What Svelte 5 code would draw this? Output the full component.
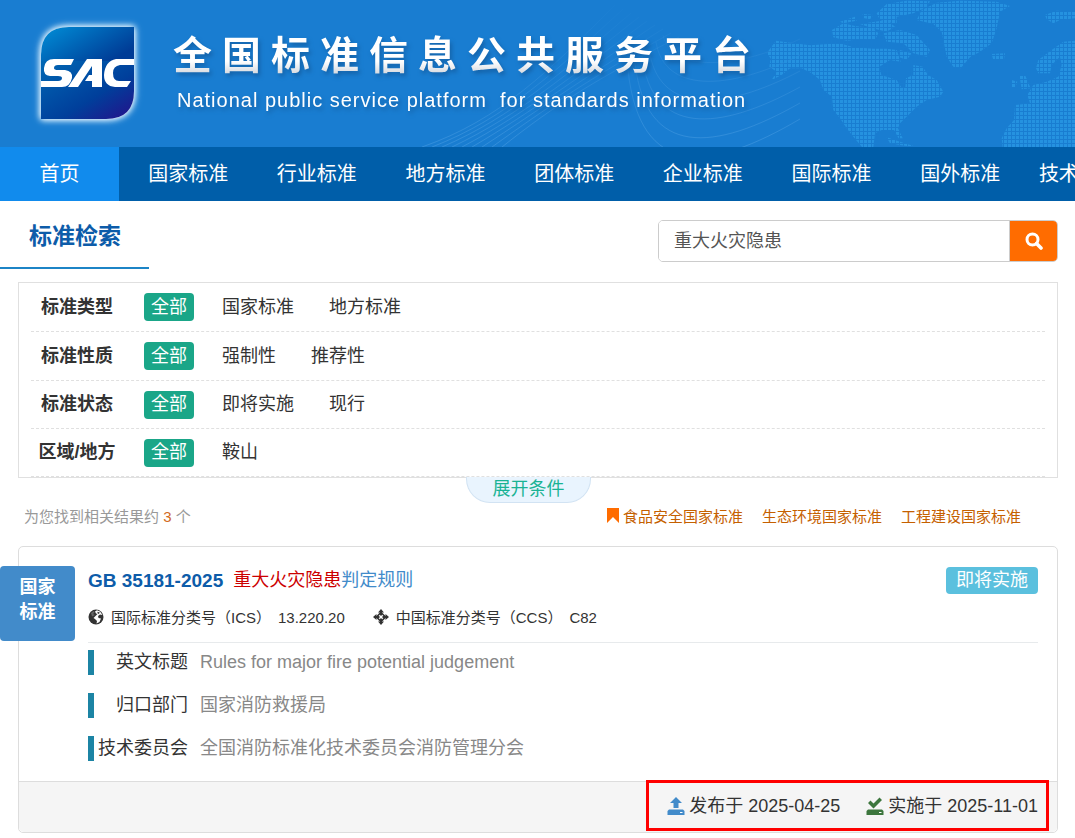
<script lang="ts">
  const navItems = ['首页', '国家标准', '行业标准', '地方标准', '团体标准', '企业标准', '国际标准', '国外标准', '技术委员会'];

  const filters = [
    { label: '标准类型', options: ['国家标准', '地方标准'] },
    { label: '标准性质', options: ['强制性', '推荐性'] },
    { label: '标准状态', options: ['即将实施', '现行'] },
    { label: '区域/地方', options: ['鞍山'] },
  ];

  const topics = ['食品安全国家标准', '生态环境国家标准', '工程建设国家标准'];

  const details = [
    { label: '英文标题', value: 'Rules for major fire potential judgement' },
    { label: '归口部门', value: '国家消防救援局' },
    { label: '技术委员会', value: '全国消防标准化技术委员会消防管理分会' },
  ];

  let keyword = '重大火灾隐患';
</script>

<header class="banner">
  <svg class="waves" viewBox="0 0 400 147" aria-hidden="true">
    <defs>
      <linearGradient id="fade" x1="0" y1="0" x2="0" y2="147" gradientUnits="userSpaceOnUse">
        <stop offset="0" stop-color="#5aa8e8" stop-opacity="0" />
        <stop offset="1" stop-color="#5aa8e8" stop-opacity="0.4" />
      </linearGradient>
    </defs>
    {#each Array(9) as _, i}
      <path d="M{22 + i * 10} 147 C{100 + i * 7} {120 - i * 2} {150 + i * 6} {70 + i} {215 + i * 8} {5 + i * 4}" />
    {/each}
    {#each Array(6) as _, i}
      <path d="M{228 + i * 7} {70 - i * 7} C{240 + i * 6} {180 - i * 22} {310 + i * 4} {172 - i * 20} 400 {119 - i * 16}" />
    {/each}
  </svg>
  <svg class="map" viewBox="0 0 1005 441" aria-hidden="true">
    <defs>
      <pattern id="dots" width="12" height="12" patternUnits="userSpaceOnUse">
        <rect width="9" height="9" fill="#2592e0" />
      </pattern>
    </defs>
    <g fill="url(#dots)">
      <path d="M80 160 L108 122 150 128 210 136 300 130 340 142 400 146 440 146 470 150 482 185 450 180 418 200 424 225 470 240 484 262 496 262 498 235 520 225 520 195 548 200 564 225 590 240 610 275 600 290 560 300 530 320 505 345 480 370 474 385 488 415 476 415 462 390 425 390 405 400 400 441 366 441 340 410 320 385 300 355 280 330 276 290 250 270 240 240 215 220 185 205 150 205 125 225 95 240 110 215 88 200 92 175z" />
      <path d="M276 90 L310 70 345 78 400 85 415 100 405 120 360 118 320 122 280 112z M300 65 L345 50 350 62 310 70z M368 42 L400 45 390 58 370 54z M360 72 L440 60 465 80 440 95 395 84z M410 40 L440 12 500 2 570 4 560 22 520 40 470 50 470 72 420 60z M430 100 L480 90 530 105 570 150 560 170 520 160 490 130 440 125z M480 150 L515 160 500 180 475 170z M440 412 L480 425 520 438 500 438 450 430z" />
      <path d="M545 30 L590 8 660 2 770 5 810 18 780 35 770 85 755 130 720 155 690 172 662 205 640 200 620 170 612 130 605 95 580 72 530 60z" />
      <path d="M755 162 L795 160 792 178 760 180z M915 45 L950 32 1005 35 1005 55 960 60 940 70 920 58z M838 225 L855 225 872 265 845 268z M815 240 L832 245 825 264 815 262z" />
      <path d="M1005 122 L970 125 935 150 895 180 888 205 895 220 930 220 935 195 960 170 965 195 955 230 920 245 880 255 862 285 870 310 825 315 822 360 800 385 785 415 788 441 1005 441z" />
    </g>
  </svg>

  <a href="#home" class="brand">
    <svg class="logo" viewBox="0 0 120 120" role="img" aria-label="SAC">
      <defs>
        <linearGradient id="sky" x1="0" y1="0" x2="1" y2="0.6">
          <stop offset="0" stop-color="#008fd8" />
          <stop offset="1" stop-color="#003c96" />
        </linearGradient>
        <linearGradient id="sea" x1="0" y1="0" x2="1" y2="1">
          <stop offset="0" stop-color="#0068b5" />
          <stop offset="0.6" stop-color="#003f9b" />
          <stop offset="1" stop-color="#25108a" />
        </linearGradient>
      </defs>
      <path class="glow" d="M11 40 Q11 12 39 12 H104 V76 Q104 104 76 104 H11z" />
      <path fill="url(#sky)" d="M11 40 Q11 12 39 12 H104 V46 H11z" />
      <path fill="url(#sea)" d="M11 46 H104 V76 Q104 104 76 104 H11z" />
      <g fill="#fff">
        <path d="M24 44 H44 L41 50 H28 Q24 50 24 53 Q24 55 28 55 H35 Q43 56 42 63 Q40 72 32 72 H11 V66 H28 Q32 66 32 63 Q32 61 28 61 H20 Q13 60 14 53 Q15 44 24 44z" />
        <path d="M57 44 H72 V72 H62 V66 H55 L59 60 H62 V51 L48 72 H38z" />
        <path d="M86 44 H104 V50 H90 Q83 51 83 58 Q83 66 89 66 H101 L97 72 H85 Q74 71 74 60 Q75 46 86 44z" />
      </g>
    </svg>
    <span class="titles">
      <strong>全国标准信息公共服务平台</strong>
      <span class="subtitle">National public service platform&nbsp; for standards information</span>
    </span>
  </a>
</header>

<nav>
  {#each navItems as item, i}
    <a href="#nav-{i}" class:active={i === 0}>{item}</a>
  {/each}
</nav>

<main>
  <div class="search-bar">
    <h1>标准检索</h1>
    <form class="search" on:submit|preventDefault>
      <input type="text" aria-label="标准检索" bind:value={keyword} />
      <button type="submit" aria-label="搜索">
        <svg viewBox="0 0 18 18" width="18" height="18">
          <circle cx="7.5" cy="7.5" r="5.5" fill="none" stroke="#fff" stroke-width="3" />
          <path d="M11.5 11.5 L16 16" stroke="#fff" stroke-width="3.6" stroke-linecap="round" />
        </svg>
      </button>
    </form>
  </div>

  <section class="filters">
    {#each filters as filter}
      <div class="filter">
        <b>{filter.label}</b>
        <button type="button" class="all">全部</button>
        {#each filter.options as option}
          <a href="#filter">{option}</a>
        {/each}
      </div>
    {/each}
    <button type="button" class="expand">展开条件</button>
  </section>

  <div class="summary">
    <span>为您找到相关结果约 <em>3</em> 个</span>
    <div class="topics">
      <svg viewBox="0 0 12 15" width="12" height="15" aria-hidden="true">
        <path d="M0 0 H12 V15 L6 9 L0 15z" fill="#ff6c00" />
      </svg>
      {#each topics as topic}
        <a href="#topic">{topic}</a>
      {/each}
    </div>
  </div>

  <article class="card">
    <div class="ribbon">国家<br />标准</div>
    <div class="card-body">
      <div class="card-head">
        <h2>
          <a href="#standard" class="code">GB 35181-2025</a>
          <a href="#standard"><mark>重大火灾隐患</mark>判定规则</a>
        </h2>
        <span class="status">即将实施</span>
      </div>
      <div class="classes">
        <div>
          <svg viewBox="0 0 16 16" width="16" height="16" aria-hidden="true">
            <circle cx="8" cy="8" r="7.5" fill="#333" />
            <path d="M3 4 L6 2 L6.5 3.5 L5 5 L7 6 L4 7.5z" fill="#fff" opacity="0.25" />
            <path d="M7 2.5 L9 1.2 L12 2.5 L14.5 6 L12 5.5 L10 7 L10.5 9 L13 9.5 L11.5 13 L8.5 14.5 L9 12 L7 10 L5.5 9 L7.5 7 L9.5 5 L8 4.5z" fill="#fff" />
            <path d="M9.5 2.8 L11.8 3.6 L10.8 5 L9.5 4.3z" fill="#333" />
          </svg>
          <span>国际标准分类号（ICS）</span>
          <span>13.220.20</span>
        </div>
        <div>
          <svg viewBox="0 0 16 16" width="16" height="16" aria-hidden="true">
            <path d="M8 0 L11 3.5 H9 V6.5 H7 V3.5 H5z M16 8 L12.5 11 V9 H9.5 V7 H12.5 V5z M8 16 L5 12.5 H7 V9.5 H9 V12.5 H11z M0 8 L3.5 5 V7 H6.5 V9 H3.5 V11z" fill="#333" />
            <path d="M8 3.5 L12.5 8 L8 12.5 L3.5 8z" fill="none" stroke="#333" stroke-width="1.6" />
          </svg>
          <span>中国标准分类号（CCS）</span>
          <span>C82</span>
        </div>
      </div>
      <dl>
        {#each details as detail}
          <div>
            <dt>{detail.label}</dt>
            <dd>{detail.value}</dd>
          </div>
        {/each}
      </dl>
    </div>
    <footer>
      <div class="dates">
        <span>
          <svg viewBox="0 0 18 18" width="18" height="18" aria-hidden="true">
            <path d="M9 0 L15 6 H11.5 V11 H6.5 V6 H3z M2 12.5 H16 L17.5 14 V18 H0.5 V14z" fill="#428bca" />
            <path d="M13 15.5 H15.5" stroke="#fff" />
          </svg>
          发布于 2025-04-25
        </span>
        <span>
          <svg viewBox="0 0 18 18" width="18" height="18" aria-hidden="true">
            <path d="M2 6 L4.5 3.5 L7.5 6.5 L13.5 0.5 L16 3 L7.5 11.5z M2 12.5 H16 L17.5 14 V18 H0.5 V14z" fill="#3c763d" />
            <path d="M13 15.5 H15.5" stroke="#fff" />
          </svg>
          实施于 2025-11-01
        </span>
      </div>
    </footer>
  </article>
</main>

<style>
  :global(body) {
    margin: 0;
    overflow-x: hidden;
    background: #fff;
    color: #333;
    font-family: 'Liberation Sans', 'Noto Sans CJK SC', sans-serif;
    font-size: 18px;
    line-height: 25px;
  }

  a {
    color: inherit;
    text-decoration: none;
  }

  button,
  input {
    box-sizing: border-box;
    border: 0;
    padding: 0;
    font: inherit;
  }

  .banner {
    position: relative;
    height: 147px;
    overflow: hidden;
    background: #197dd1;
  }

  .map {
    position: absolute;
    top: 0;
    right: 0;
    width: 335px;
    height: 147px;
  }

  .waves {
    position: absolute;
    top: 0;
    right: 275px;
    width: 400px;
    height: 147px;
    fill: none;
    stroke: url(#fade);
  }

  .brand {
    position: relative;
    display: flex;
    gap: 23px;
    padding: 15px 0 0 30px;
    color: #fff;
  }

  .logo {
    flex: none;
    width: 120px;
    height: 120px;
    overflow: visible;
  }

  .glow {
    fill: #fff;
    filter: drop-shadow(0 0 3px #fff) drop-shadow(0 0 3px #b0dcf8);
  }

  .titles {
    display: flex;
    flex-direction: column;
    padding-top: 15px;
    white-space: nowrap;
    filter: drop-shadow(2px 3px 2px #1462a8);
  }

  .titles strong {
    background: linear-gradient(#fff 60%, #d4d8de 85%);
    background-clip: text;
    color: transparent;
    font-size: 39px;
    line-height: 52px;
    letter-spacing: 10px;
  }

  .subtitle {
    padding-left: 4px;
    font-size: 20px;
    line-height: 36px;
    letter-spacing: 1px;
  }

  nav {
    display: flex;
    gap: 0.9%;
    overflow: hidden;
    background: #005ea9;
    color: #fff;
    font-size: 20px;
    line-height: 54px;
    text-align: center;
  }

  nav a {
    flex: 0 0 119px;
  }

  nav a.active {
    background: #118bed;
  }

  .search-bar {
    display: flex;
    justify-content: space-between;
    align-items: flex-start;
    padding-right: 17px;
  }

  h1 {
    margin: 0;
    padding: 16px 28px 12px 29px;
    border-bottom: 2px solid #1c84c6;
    color: #0d5ca9;
    font-size: 23px;
    line-height: 38px;
  }

  .search {
    display: flex;
    width: 400px;
    height: 42px;
    box-sizing: border-box;
    margin-top: 19px;
    border: 1px solid #ccc;
    border-radius: 5px;
    overflow: hidden;
  }

  .search input {
    flex: 1;
    min-width: 0;
    padding-left: 15px;
    border-right: 1px solid #ccc;
    color: #555;
    outline: none;
  }

  .search button {
    display: grid;
    place-items: center;
    width: 47px;
    background: #ff6c00;
  }

  .filters {
    position: relative;
    margin: 13px 17px 0 18px;
    padding: 0 12px;
    border: 1px solid #e0e0e0;
  }

  .filter {
    display: flex;
    align-items: center;
    box-sizing: border-box;
    height: 49px;
    border-bottom: 1px dashed #e0e0e0;
  }

  .filter:nth-child(n + 3) {
    height: 48px;
  }

  .filter b {
    width: 92px;
    margin-right: 21px;
    text-align: center;
  }

  .filter a {
    margin-left: 28px;
  }

  .filter a + a {
    margin-left: 35px;
  }

  .all {
    width: 50px;
    height: 28px;
    border-radius: 4px;
    background: #1aa688;
    color: #fff;
  }

  .expand {
    position: absolute;
    top: 100%;
    left: 50%;
    width: 125px;
    height: 26px;
    margin-left: -72px;
    border: 1px solid #d2e3f3;
    border-top: 0;
    border-radius: 0 0 24px 24px;
    background: #e9f4fe;
    color: #1ab394;
  }

  .summary {
    display: flex;
    justify-content: space-between;
    padding: 26px 54px 17px 24px;
    color: #999;
    font-size: 15px;
  }

  .summary em {
    color: #d2691e;
    font-style: normal;
  }

  .topics {
    display: flex;
    gap: 19px;
    color: #c56000;
  }

  .topics svg {
    margin: 4px -15px 0 0;
  }

  .card {
    position: relative;
    margin: 0 17px 0 18px;
    border: 1px solid #ddd;
    border-radius: 5px;
  }

  .ribbon {
    position: absolute;
    top: 19px;
    left: -19px;
    box-sizing: border-box;
    width: 75px;
    height: 75px;
    padding-top: 9px;
    border-radius: 4px;
    background: #428bca;
    color: #fff;
    font-weight: bold;
    text-align: center;
  }

  .card-body {
    padding: 20px 19px 20px 69px;
  }

  .card-head {
    display: flex;
    justify-content: space-between;
    align-items: center;
  }

  h2 {
    display: flex;
    gap: 10px;
    margin: 0;
    color: #428bca;
    font-size: 18px;
    font-weight: normal;
  }

  .code {
    color: #0d5ca9;
    font-size: 19px;
    font-weight: bold;
  }

  mark {
    background: none;
    color: #c00;
  }

  .status {
    padding: 1px 10px;
    border-radius: 4px;
    background: #5bc0de;
    color: #fff;
  }

  .classes {
    display: flex;
    gap: 28px;
    padding: 11px 0 12px;
    border-bottom: 1px solid #e7eaec;
    font-size: 15px;
  }

  .classes div {
    display: flex;
    gap: 7px;
  }

  .classes svg {
    margin-top: 4px;
  }

  dl {
    display: grid;
    gap: 18px;
    margin: 7px 0 0;
  }

  dl div {
    display: flex;
    gap: 12px;
    border-left: 6px solid #1c84a4;
  }

  dt {
    width: 94px;
    text-align: right;
  }

  dd {
    margin: 0;
    color: #888;
  }

  footer {
    display: flex;
    justify-content: flex-end;
    height: 50px;
    border-top: 1px solid #ddd;
    border-radius: 0 0 5px 5px;
    background: #f5f5f5;
  }

  .dates {
    display: flex;
    gap: 26px;
    box-sizing: border-box;
    height: 51px;
    margin: -2px 8px 0 0;
    padding: 11px 8px 0 18px;
    border: 3px solid #f00;
  }

  .dates span {
    display: flex;
    gap: 4px;
  }

  .dates svg {
    margin-top: 3px;
  }
</style>
